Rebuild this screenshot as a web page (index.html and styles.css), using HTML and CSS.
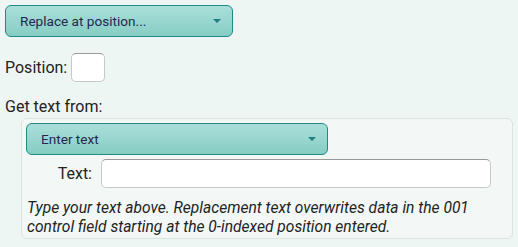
FILE: index.html
```html
<!DOCTYPE html>
<html>
<head>
<meta charset="utf-8">
<link rel="stylesheet" href="styles.css">
</head>
<body>
<div class="page">
  <div class="select select-wide">
    <span>Replace at position...</span>
    <span class="caret"></span>
  </div>
  <div class="row position-row">
    <label class="label">Position:</label>
    <div class="input input-small"></div>
  </div>
  <div class="label get-label">Get text from:</div>
  <div class="fieldset">
    <div class="select select-mid">
      <span>Enter text</span>
      <span class="caret"></span>
    </div>
    <div class="row text-row">
      <label class="label text-label">Text:</label>
      <div class="input input-wide"></div>
    </div>
    <p class="help">Type your text above. Replacement text overwrites data in the 001 control field starting at the 0-indexed position entered.</p>
  </div>
</div>
</body>
</html>
```
FILE: styles.css
```css
html, body {
  margin: 0;
  padding: 0;
}
body {
  background: #eef6f3;
  font-family: Roboto, "Liberation Sans", sans-serif;
  color: #222;
  width: 518px;
  height: 247px;
  overflow: hidden;
}
.page {
  padding: 5px;
}
.select {
  box-sizing: border-box;
  height: 32px;
  border: 1px solid #1f8a86;
  border-radius: 6px;
  background: linear-gradient(#aadfd9, #86cdc4);
  display: flex;
  align-items: center;
  justify-content: space-between;
  padding: 0 10px 0 14px;
  font-size: 13.6px;
  color: #262650;
}
.select-wide {
  width: 228px;
}
.select-mid {
  width: 302px;
}
.caret {
  width: 0;
  height: 0;
  border-left: 4px solid transparent;
  border-right: 4px solid transparent;
  border-top: 4px solid #1f7f80;
  margin-right: 1px;
}
.row {
  display: flex;
  align-items: center;
}
.label {
  font-size: 16px;
  color: #222;
}
.position-row {
  margin-top: 16px;
  gap: 4px;
}
.input {
  box-sizing: border-box;
  background: #fff;
  border: 1px solid #c8c8c8;
  border-top-color: #999;
  border-radius: 5px;
  height: 29px;
}
.input-small {
  width: 34px;
}
.get-label {
  margin-top: 15px;
  line-height: 19px;
}
.fieldset {
  box-sizing: border-box;
  margin: 2px 0 0 16px;
  width: 492px;
  height: 121px;
  border: 1px solid #dbe3e0;
  border-radius: 6px;
  background: #f3f8f6;
  padding: 4px;
}
.text-row {
  margin-top: 4px;
}
.text-label {
  width: 75px;
  text-align: right;
  padding-right: 9px;
  box-sizing: border-box;
}
.input-wide {
  width: 390px;
}
.help {
  margin: 11px 0 0 1px;
  font-style: italic;
  font-size: 15.6px;
  line-height: 19px;
  color: #222;
}
```
